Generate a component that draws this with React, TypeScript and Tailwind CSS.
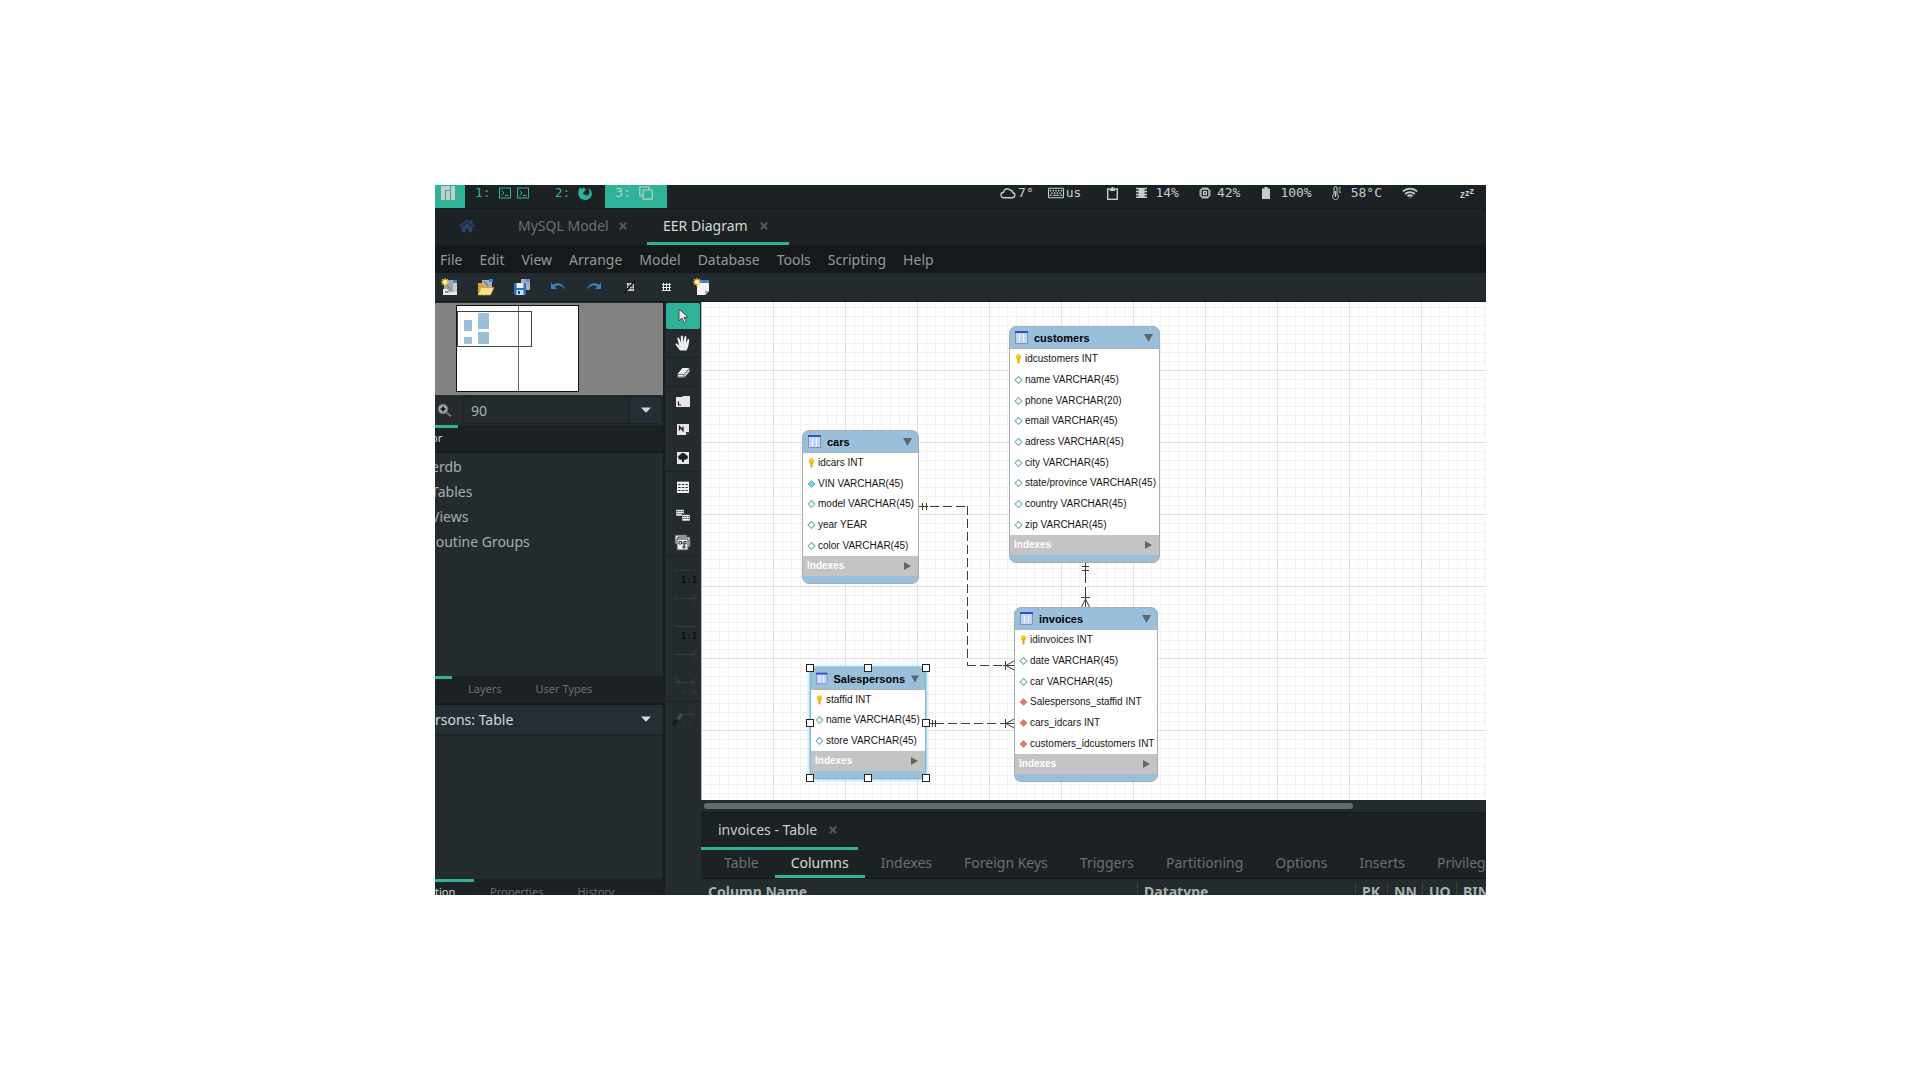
import React from "react";
import { SiManjaro } from "react-icons/si";
import { FaHome, FaRegKeyboard } from "react-icons/fa";

type ColumnKind = "key" | "plain" | "filled" | "foreign";
type Column = { kind: ColumnKind; text: string };

/* ---------- small glyphs ---------- */

function TerminalIcon() {
  return (
    <svg width="12" height="12" viewBox="0 0 12 12" fill="none" stroke="currentColor" aria-hidden="true">
      <rect x="0.5" y="1" width="11" height="10" />
      <path d="M2.5 3.5l2.5 2.5-2.5 2.5M6 8.5h3.5" />
    </svg>
  );
}

function FirefoxIcon() {
  return (
    <svg width="14" height="14" viewBox="0 0 14 14" aria-hidden="true">
      <path
        d="M1.600 1.500c.5.300 1.100.700 1.500 1.200.6-.200 1.200-.2 1.800-.1C5.300 1.700 6 1.200 6.700 1c-.4.700-.4 1.300 0 1.900.7.300 1.500.3 2 .7-.5.700-1.700.8-2.200 1.300-.3.500 0 .9-.4 1.300-.7.200-1.300.6-1 1.400.5 1.100 1.900 1.300 2.900.8.7-.3 1.200-.3 1.500.2-.6.900-1.600 1.300-2.600 1.300 2.400.6 4.500-1 4.600-3.300 0-1.800-.8-3.500-2-4.600 3 1 4.500 3.500 4.300 6.200C13.500 11.600 10.700 14 7.200 14 3.500 14 .4 11.400.3 7.600.2 5.200 1 3.300 1.600 1.500z"
        fill="currentColor"
      />
    </svg>
  );
}

function CopyIcon() {
  return (
    <svg width="14" height="14" viewBox="0 0 14 14" fill="none" stroke="currentColor" strokeWidth="1.2" aria-hidden="true">
      <path d="M4 10H.8V1h9v3" />
      <rect x="4" y="4" width="9.4" height="9.2" rx="0.6" />
    </svg>
  );
}

function CloudIcon() {
  return (
    <svg width="16" height="12" viewBox="0 0 16 12" fill="none" stroke="currentColor" strokeWidth="1.4" aria-hidden="true">
      <path d="M4 10.8h8.2a2.7 2.7 0 0 0 .6-5.3A3.2 3.2 0 0 0 9.9 3 3.6 3.6 0 0 0 3.6 5.2 2.8 2.8 0 0 0 4 10.8z" />
    </svg>
  );
}

function ClipboardIcon() {
  return (
    <svg width="11" height="13" viewBox="0 0 11 13" fill="none" stroke="currentColor" strokeWidth="1.4" aria-hidden="true">
      <rect x="0.7" y="2" width="9.6" height="10.3" />
      <path d="M3 3h5M4.5 1h2" strokeWidth="2" />
    </svg>
  );
}

function MemoryIcon() {
  return (
    <svg width="11" height="12" viewBox="0 0 11 12" fill="currentColor" aria-hidden="true">
      <path d="M2.5 1h6v10h-6z" />
      <path d="M0 1.5h11M0 4.5h11M0 7.5h11M0 10.3h11" stroke="currentColor" strokeWidth="1.4" />
    </svg>
  );
}

function CpuIcon() {
  return (
    <svg width="12" height="12" viewBox="0 0 12 12" fill="none" stroke="currentColor" strokeWidth="1.3" aria-hidden="true">
      <rect x="2" y="2" width="8" height="8" rx="1" />
      <rect x="4.6" y="4.6" width="2.8" height="2.8" />
      <path d="M4 0v2M6 0v2M8 0v2M4 10v2M6 10v2M8 10v2M0 4h2M0 6h2M0 8h2M10 4h2M10 6h2M10 8h2" strokeWidth="0.9" />
    </svg>
  );
}

function BatteryIcon() {
  return (
    <svg width="8" height="12" viewBox="0 0 8 12" fill="currentColor" aria-hidden="true">
      <path d="M2.4 0h3.2v1.4H8V12H0V1.4h2.4z" />
    </svg>
  );
}

function ThermometerIcon() {
  return (
    <svg width="9" height="14" viewBox="0 0 9 14" fill="none" stroke="currentColor" aria-hidden="true">
      <path d="M2 8.2V2a1.5 1.5 0 0 1 3 0v6.2a2.9 2.9 0 1 1-3 0z" />
      <path d="M3.5 5v6" strokeWidth="1.4" />
      <path d="M6.5 2H9M6.5 4H8M6.5 6H9" />
    </svg>
  );
}

function WifiIcon() {
  return (
    <svg width="16" height="12" viewBox="0 0 16 12" fill="none" stroke="currentColor" strokeWidth="1.8" aria-label="Wireless">
      <path d="M.8 4.4a10.6 10.6 0 0 1 14.4 0M3.2 7a7 7 0 0 1 9.6 0M5.5 9.3a3.8 3.8 0 0 1 5 0" />
      <circle cx="8" cy="10.9" r="0.6" fill="currentColor" stroke="none" />
    </svg>
  );
}

function Chevron() {
  return (
    <svg width="10" height="6" viewBox="0 0 10 6" fill="#d3dad8" aria-hidden="true">
      <path d="M0 .5h10L5 5.8z" />
    </svg>
  );
}

function CloseIcon() {
  return (
    <svg width="8" height="8" viewBox="0 0 8 8" stroke="#535859" strokeWidth="2" aria-hidden="true">
      <path d="M.8.8l6.4 6.4M7.2.8L.8 7.2" />
    </svg>
  );
}

function Star() {
  return (
    <g>
      <path d="M4 .2v8M.2 4h7.6M1.2 1.2l5.6 5.6M6.8 1.2L1.2 6.8" stroke="#f2c53d" strokeWidth="1.5" />
      <circle cx="4" cy="4" r="2" fill="#fff3b8" />
    </g>
  );
}

/* ---------- toolbar drawings ---------- */

const toolbarGroups: { label: string; art: React.ReactNode }[][] = [
  [
    {
      label: "New model",
      art: (
        <>
          <path d="M3 2h9v14H3z" fill="#a3a6a4" />
          <path d="M12 2h4v3h-4z" fill="#3f7fdc" />
          <path d="M12 5h4v11h-4z" fill="#c9cccb" />
          <path d="M6 7l4 5" stroke="#838987" strokeWidth="1.4" />
          <path d="M2 11h4l2 3h8v3H2z" fill="#e9ebea" />
          <path d="M4 13h3l1 2H4z" fill="#8f9593" />
          <Star />
        </>
      ),
    },
    {
      label: "Open model",
      art: (
        <>
          <path d="M5 2h10v8H5z" fill="#a9b0b5" />
          <path d="M12 1h4v3h-4z" fill="#3f7fdc" />
          <path d="M1 5h4l1 2v10H1z" fill="#d9a528" />
          <path d="M4 9.500h13l-3.500 7.500H1z" fill="#fbe08a" stroke="#c99524" strokeWidth="0.7" />
          <path d="M7 3l4 5" stroke="#727b80" strokeWidth="1.300" />
        </>
      ),
    },
    {
      label: "Save model",
      art: (
        <>
          <path d="M8 1h9v11H8z" fill="#a9b0b5" />
          <path d="M13 1h4v3h-4z" fill="#5b93e6" />
          <path d="M1 5h12v12H1z" fill="#2a6fc4" />
          <path d="M3.500 5h7v5h-7z" fill="#e9f0f7" />
          <path d="M3.500 12h7v5h-7z" fill="#cfe0f2" />
          <path d="M5 13h2v3H5z" fill="#1c4b88" />
        </>
      ),
    },
  ],
  [
    {
      label: "Undo",
      art: <path d="M2 4v7h6L5.800 8.700C9 6.500 12.500 7.300 16 11.500 14.500 5.500 8.500 3.500 4 7z" fill="#3f7fbb" />,
    },
    {
      label: "Redo",
      art: <path d="M16 4v7h-6l2.200-2.300C9 6.500 5.500 7.300 2 11.500 3.500 5.500 9.500 3.500 14 7z" fill="#3f7fbb" />,
    },
  ],
  [
    {
      label: "Toggle grid",
      art: (
        <>
          <path d="M6 5h7v8H6z" fill="#efefef" />
          <path d="M8 5v8M11 5v8M6 8h7M6 10.500h7" stroke="#5c6263" />
          <path d="M3 15L14 3" stroke="#0b0d0e" strokeWidth="1.600" />
        </>
      ),
    },
    {
      label: "Toggle alignment",
      art: <path d="M6.500 5v8M9.500 5v8M12.500 5v8M5 6.500h9M5 9.500h9M5 12.500h9" stroke="#e7eaea" />,
    },
  ],
  [
    {
      label: "New diagram",
      art: (
        <>
          <path d="M4 2h12v4H4z" fill="#3f7fdc" />
          <path d="M4 5h12v8l-4 4H4z" fill="#f3f4f4" />
          <path d="M16 13h-4v4z" fill="#a9adad" />
          <Star />
        </>
      ),
    },
  ],
];

const MiniTable = ({ x, y }: { x: number; y: number }) => (
  <g transform={`translate(${x} ${y})`}>
    <path d="M0 0h8v7H0z" fill="#f0f0f0" stroke="#2c3132" strokeWidth="0.6" />
    <path d="M0 .5h8" stroke="#474d4e" />
    <path d="M1 2.500h6M1 4.500h6" stroke="#474d4e" strokeDasharray="1.500 .8" />
  </g>
);

const toolGroups: { label: string; active?: boolean; art: React.ReactNode }[][] = [
  [
    {
      label: "Select",
      active: true,
      art: <path d="M5 2v12l3-3 2.300 5 2-1-2.300-4.700h4z" fill="#f2f2f2" stroke="#4a4a4a" />,
    },
    {
      label: "Hand",
      art: (
        <path
          d="M6 16.500l-4.600-6c-.3-1.200 1.500-1.500 2.200-.6L5.200 11.400 3.400 4.800c-.1-1.500 1.500-1.600 1.900-.2L7 8.500 6.800 2.600c.2-1.500 1.900-1.500 2.100 0L9.300 8.300l1.100-5.400c.4-1.300 2-1.100 2 .3L11.900 9l1.500-3.300c.6-1.200 2.100-.8 1.900.6-.6 3.700-.7 7.200-2.900 10.200z"
          fill="#ededed"
        />
      ),
    },
  ],
  [
    {
      label: "Eraser",
      art: (
        <>
          <path d="M8.500 5h7l-5 6h-7z" fill="#fafafa" />
          <path d="M3.500 11h7L15.500 5v3.500l-5 6h-7z" fill="#d9dbdb" />
          <path d="M3.500 11.500h6.500v2.500H3.500z" fill="#f4f4f4" stroke="#3b4041" strokeWidth="0.8" />
          <path d="M10.500 11l5-6" stroke="#3b4041" strokeWidth="0.8" />
        </>
      ),
    },
  ],
  [
    {
      label: "Layer",
      art: (
        <>
          <path d="M2 5h6l1-1h7v11H2z" fill="#e6e6e6" />
          <path d="M4.500 9.500v3.500H7" stroke="#222" strokeWidth="1.200" fill="none" />
        </>
      ),
    },
    {
      label: "Note",
      art: (
        <>
          <path d="M3 4h12v8l-3 3H3z" fill="#e6e6e6" />
          <path d="M12 12h3l-3 3z" fill="#2a2f30" />
          <path d="M5.500 10.500V6.500l3.500 4v-4" stroke="#222" strokeWidth="1.300" fill="none" />
        </>
      ),
    },
    {
      label: "Image",
      art: (
        <>
          <path d="M3 4h12v12H3z" fill="#e6e6e6" />
          <path d="M9 5a3 3 0 0 1 3 2 2.200 2.200 0 0 1 1 4 2.500 2.500 0 0 1-3 .5V14H8v-2.500A2.500 2.500 0 0 1 5 11a2.200 2.200 0 0 1 1-4 3 3 0 0 1 3-2z" fill="#1d1f20" />
        </>
      ),
    },
  ],
  [
    {
      label: "Table",
      art: (
        <>
          <path d="M3 5h12v11H3z" fill="#f0f0f0" />
          <path d="M4 7.500h10M4 10.500h10M4 13.500h10" stroke="#3b4041" strokeDasharray="2.700 1" />
          <path d="M3 4.500h12" stroke="#6b7071" />
        </>
      ),
    },
    {
      label: "View",
      art: (
        <>
          <MiniTable x={2} y={4} />
          <MiniTable x={8} y={9} />
        </>
      ),
    },
    {
      label: "Routine group",
      art: (
        <>
          <path d="M1 2h12v9H1z" fill="#dcdcdc" stroke="#454b4c" />
          <path d="M4 4h12v10H4z" fill="#dcdcdc" stroke="#454b4c" />
          <path d="M3 6h11v11H3z" fill="#efefef" stroke="#454b4c" />
          <path d="M5 8.500h2.500V11H5zM10 8.500h2V11h-2zM9 13h2v2H9zM7.500 10h2.500M10 11v2" stroke="#222" strokeWidth="0.9" fill="none" />
        </>
      ),
    },
  ],
];

const relationTools = [
  { label: "1:1", dashed: true, many: false, both: false, tone: "text-black" },
  { label: "1:n", dashed: true, many: true, both: false, tone: "text-[#2c2f31]" },
  { label: "1:1", dashed: false, many: false, both: false, tone: "text-black" },
  { label: "1:n", dashed: false, many: true, both: false, tone: "text-[#2c2f31]" },
  { label: "n:m", dashed: false, many: true, both: true, tone: "text-[#35393b]" },
];

/* ---------- diagram ---------- */

const marks: Record<ColumnKind, React.ReactNode> = {
  key: (
    <>
      <circle cx="4.500" cy="3" r="2.700" fill="#f6c81e" />
      <path d="M3.500 4h2v5l-1 .8-1-.8z" fill="#e0a800" />
    </>
  ),
  plain: <path d="M4.500 1.500L8 5 4.500 8.500 1 5z" fill="#fff" stroke="#7db5b5" strokeWidth="1.100" />,
  filled: <path d="M4.500 1.500L8 5 4.500 8.500 1 5z" fill="#63dbe3" stroke="#7ab0b3" strokeWidth="0.900" />,
  foreign: <path d="M4.500 1.500L8 5 4.500 8.500 1 5z" fill="#e8756c" stroke="#c58c88" strokeWidth="0.900" />,
};

function EntityTable({ name, columns, place, rows, selected }: { name: string; columns: Column[]; place: string; rows: string; selected?: boolean }) {
  return (
    <section aria-label={name} className={`absolute ${place}`}>
      <div
        className={`overflow-hidden rounded-[7px] border bg-[#99bfda] ${
          selected ? "border-[#8fb4c9] shadow-[0_0_3px_1px_#7fd4f5]" : "border-[#a9adb0]"
        }`}
      >
        <header className="flex h-[22px] items-center gap-1.5 border-b border-[#a9b4bb] pr-1.5 pl-[5px]">
          <svg width="13" height="13" viewBox="0 0 13 13" aria-hidden="true">
            <path d="M.5.5h12v12H.5z" fill="#c3d4f5" stroke="#7d93bd" />
            <path d="M0 0h13v2H0z" fill="#2b4fd0" />
            <path d="M4.500 3v8M8.500 3v8" stroke="#f1f6ff" />
          </svg>
          <h2 className="text-[11px] leading-4 font-bold text-black">{name}</h2>
          <svg className="ml-auto" width="9" height="8" viewBox="0 0 9 8" fill="#5d666c" aria-hidden="true">
            <path d="M0 0h9L4.500 8z" />
          </svg>
        </header>
        <ul className={`flex flex-col bg-white ${rows}`}>
          {columns.map((c) => (
            <li key={c.text} className="flex min-h-0 flex-1 items-center gap-0.5 pl-1 text-[10px] leading-4 whitespace-nowrap text-[#151515]">
              <svg width="9" height="10" viewBox="0 0 9 10" className="shrink-0" aria-hidden="true">
                {marks[c.kind]}
              </svg>
              {c.text}
            </li>
          ))}
        </ul>
        <div className="flex h-5 items-center justify-between bg-[#c4c4c4] pr-[7px] pl-1 text-[10px] font-bold text-white">
          Indexes
          <svg width="7" height="8" viewBox="0 0 7 8" fill="#666" aria-hidden="true">
            <path d="M0 0v8l7-4z" />
          </svg>
        </div>
        <div className="h-[7px]" />
      </div>
      {selected && (
        <div className="absolute -inset-x-1 -inset-y-[3px] grid grid-cols-3 grid-rows-3">
          {[
            "self-start justify-self-start",
            "self-start justify-self-center",
            "self-start justify-self-end",
            "self-center justify-self-start",
            "",
            "self-center justify-self-end",
            "self-end justify-self-start",
            "self-end justify-self-center",
            "self-end justify-self-end",
          ].map((spot, i) => (spot ? <span key={i} className={`size-2 border border-[#222] bg-white ${spot}`} /> : <span key={i} />))}
        </div>
      )}
    </section>
  );
}

const v = (text: string): Column => ({ kind: "plain", text });

const cars: Column[] = [
  { kind: "key", text: "idcars INT" },
  { kind: "filled", text: "VIN VARCHAR(45)" },
  v("model VARCHAR(45)"),
  v("year YEAR"),
  v("color VARCHAR(45)"),
];
const customers: Column[] = [
  { kind: "key", text: "idcustomers INT" },
  v("name VARCHAR(45)"),
  v("phone VARCHAR(20)"),
  v("email VARCHAR(45)"),
  v("adress VARCHAR(45)"),
  v("city VARCHAR(45)"),
  v("state/province VARCHAR(45)"),
  v("country VARCHAR(45)"),
  v("zip VARCHAR(45)"),
];
const invoices: Column[] = [
  { kind: "key", text: "idinvoices INT" },
  v("date VARCHAR(45)"),
  v("car VARCHAR(45)"),
  { kind: "foreign", text: "Salespersons_staffid INT" },
  { kind: "foreign", text: "cars_idcars INT" },
  { kind: "foreign", text: "customers_idcustomers INT" },
];
const salespersons: Column[] = [{ kind: "key", text: "staffid INT" }, v("name VARCHAR(45)"), v("store VARCHAR(45)")];

function DiagramCanvas() {
  return (
    <div className="relative min-h-0 flex-1 overflow-hidden border-l border-[#b5b9ba] bg-white font-['Liberation_Sans',sans-serif]">
      <svg className="absolute inset-0 size-full" aria-hidden="true">
        <defs>
          <pattern id="minor" width="9" height="9" y="5" patternUnits="userSpaceOnUse">
            <path d="M8.500 0v9M0 .5h9" stroke="#f1f1f1" />
          </pattern>
          <pattern id="major" width="72" height="72" y="68" patternUnits="userSpaceOnUse">
            <path d="M71.500 0v72M0 .5h72" stroke="#e0e0e0" />
          </pattern>
        </defs>
        <rect width="100%" height="100%" fill="url(#minor)" />
        <rect width="100%" height="100%" fill="url(#major)" />
        <g fill="none" stroke="#3c3c3c">
          <g strokeDasharray="9 4">
            <path d="M228 204.500h37M265.500 204v159M265 363.500h36" />
            <path d="M233 421.500h70" />
            <path d="M383.500 272v22" />
          </g>
          <path d="M217 204.500h9M220.500 201v7M224.500 201v7" />
          <path d="M303.500 359v9M312 359l-8 4.500 8 4.500M301 363.500h11" />
          <path d="M227 421.500h11M230.500 418v7M233.500 418v7" />
          <path d="M303.500 417v9M312 417l-8 4.500 8 4.500M301 421.500h11" />
          <path d="M383.500 260v12M380 264.500h7M380 268.500h7" />
          <path d="M379 295.500h9M379.500 305l4-8 4 8M383.500 294v11" />
        </g>
      </svg>
      <EntityTable name="customers" columns={customers} place="left-[307px] top-6 w-[151px]" rows="h-[186px]" />
      <EntityTable name="cars" columns={cars} place="left-[100px] top-32 w-[117px]" rows="h-[103px]" />
      <EntityTable name="invoices" columns={invoices} place="left-[312px] top-[305px] w-[144px]" rows="h-[124px]" />
      <EntityTable name="Salespersons" columns={salespersons} place="left-[108px] top-[365px] w-[116px]" rows="h-[61px]" selected />
    </div>
  );
}

/* ---------- bars and panels ---------- */

function StatusBar() {
  return (
    <div className="flex h-6 shrink-0 border-b border-[#15191b] font-['DejaVu_Sans_Mono',monospace] text-[13px] leading-4 whitespace-pre text-[#c5cdcb]">
      <div className="flex w-[30px] justify-center bg-[#2eb398] pr-1">
        <SiManjaro className="mt-px size-3.5" aria-label="Menu" />
      </div>
      <button className="flex items-start gap-2 pr-4 pl-2.5 text-[#2eb398]">
        <span>1:</span>
        <span className="flex gap-1.5 pt-0.5">
          <TerminalIcon />
          <TerminalIcon />
        </span>
      </button>
      <button className="flex items-start gap-2 px-[13px] pl-2.5 text-[#2eb398]">
        <span>2:</span>
        <span className="pt-px">
          <FirefoxIcon />
        </span>
      </button>
      <button className="flex w-[62px] items-start gap-2 bg-[#2eb398] pl-2.5">
        <span>3:</span>
        <span className="pt-px">
          <CopyIcon />
        </span>
      </button>
      <div className="ml-auto flex h-4 items-center pr-3">
        <CloudIcon />
        <span className="ml-0.5">7°</span>
        <FaRegKeyboard className="ml-3.5 size-4" aria-label="Keyboard layout" />
        <span className="ml-0.5">us</span>
        <span className="ml-[26px]">
          <ClipboardIcon />
        </span>
        <span className="ml-[18px]">
          <MemoryIcon />
        </span>
        <span className="ml-2">14%</span>
        <span className="ml-5">
          <CpuIcon />
        </span>
        <span className="ml-1.5">42%</span>
        <span className="ml-[22px]">
          <BatteryIcon />
        </span>
        <span className="ml-2.5">100%</span>
        <span className="ml-5">
          <ThermometerIcon />
        </span>
        <span className="ml-2.5">58°C</span>
        <span className="ml-5">
          <WifiIcon />
        </span>
        <span className="ml-[42px] flex items-end font-['Liberation_Sans',sans-serif] text-[10px] leading-3 font-bold">
          <span>z</span>
          <span className="pb-0.5 text-[9px] leading-3">z</span>
          <span className="pb-1 text-[9px] leading-3">z</span>
        </span>
      </div>
    </div>
  );
}

function DocumentTabs() {
  return (
    <div className="flex h-9 shrink-0 bg-[#1c2224]" role="tablist">
      <button role="tab" aria-label="Home" className="flex w-[67px] items-center pb-0.5 pl-6 text-[#2c4069]">
        <FaHome className="size-4" />
      </button>
      <button role="tab" className="flex w-[145px] items-center gap-2.5 pb-0.5 pl-4 text-[#667071]">
        MySQL Model
        <CloseIcon />
      </button>
      <button role="tab" aria-selected="true" className="flex w-[142px] items-center gap-3 border-b-3 border-[#2eb398] pt-px pl-4 text-[#d3dad8]">
        EER Diagram
        <CloseIcon />
      </button>
    </div>
  );
}

const menus = ["File", "Edit", "View", "Arrange", "Model", "Database", "Tools", "Scripting", "Help"];

function Overview() {
  return (
    <svg width="228" height="92" className="block w-full bg-[#828282]" viewBox="0 0 228 92" preserveAspectRatio="xMinYMin slice" aria-label="Bird's eye view">
      <rect x="21.500" y="2.500" width="122" height="86" fill="#fff" stroke="#111" />
      <path d="M83.500 3v85" stroke="#666" />
      <path d="M29 17h8v11h-8zM43 10h11v16H43zM29 34h8v7h-8zM43 29h11v12H43z" fill="#99bfda" />
      <rect x="22.500" y="8.500" width="74" height="35" fill="none" stroke="#444" />
    </svg>
  );
}

function Sidebar() {
  const small = "text-[11px] leading-4";
  return (
    <aside className="flex w-[230px] shrink-0 flex-col overflow-hidden border-r-2 border-[#181d1f]">
      <div className="pt-px">
        <Overview />
      </div>
      <div className="flex h-[30px] shrink-0 items-center pr-px">
        <button aria-label="Zoom in" className="w-[27px] pl-0.5">
          <svg width="15" height="15" viewBox="0 0 15 15" aria-hidden="true">
            <path d="M9 9l5 4.500" stroke="#8a6a55" strokeWidth="2" />
            <circle cx="6" cy="6" r="4.800" fill="#9fa5a5" stroke="#6a7071" />
            <path d="M6 3.500v5M3.500 6h5" stroke="#111" strokeWidth="1.600" />
          </svg>
        </button>
        <div className="flex h-7 min-w-0 flex-1 rounded-sm border border-[#1a2022]">
          <input aria-label="Zoom level" defaultValue="90" className="min-w-0 flex-1 bg-transparent px-2 pt-0.5 text-sm text-[#a9b3b1]" />
          <button aria-label="Zoom presets" className="grid w-8 place-items-center border-l border-[#1a2022] bg-[#252d35]">
            <Chevron />
          </button>
        </div>
      </div>
      <div className="h-7 shrink-0 border-b-2 border-[#15191b] bg-[#1c2224]" role="tablist">
        <button role="tab" aria-selected="true" className={`flex h-[26px] w-[23px] border-t-3 border-[#2eb398] pt-0.5 text-[#d3dad8] ${small}`}>
          <span className="-ml-1">or</span>
        </button>
      </div>
      <ul className="-ml-1 min-h-0 flex-1 pt-px text-sm leading-[25px] text-[#a3aead]">
        <li>erdb</li>
        <li>Tables</li>
        <li>Views</li>
        <li className="-ml-1">Routine Groups</li>
      </ul>
      <div className={`flex h-[29px] shrink-0 items-start border-b-2 border-[#15191b] bg-[#1c2224] text-[#667071] ${small}`} role="tablist">
        <button role="tab" aria-label="Catalog" aria-selected="true" className="h-[3px] w-[17px] bg-[#2eb398]" />
        <button role="tab" className="ml-4 h-[26px]">Layers</button>
        <button role="tab" className="ml-[34px] h-[26px]">User Types</button>
      </div>
      <div className="relative shrink-0 pr-px pb-0.5">
        <select aria-label="Selected object" className="h-7 w-full appearance-none bg-[#252d35] pt-0.5 text-sm text-[#d3dad8]">
          <option>rsons: Table</option>
        </select>
        <span className="pointer-events-none absolute top-[11px] right-3">
          <Chevron />
        </span>
      </div>
      <div className="h-36 shrink-0 border-t border-r border-[#1c2224]" />
      <div className={`flex h-4 shrink-0 items-start overflow-hidden bg-[#1c2224] text-[#667071] ${small}`} role="tablist">
        <button role="tab" aria-selected="true" className="w-[39px] border-t-3 border-[#2eb398] pt-0.5 text-left text-[#d3dad8]">
          tion
        </button>
        <button role="tab" className="ml-4 pt-[5px]">Properties</button>
        <button role="tab" className="ml-[34px] pt-[5px]">History</button>
      </div>
    </aside>
  );
}

function ToolStrip() {
  return (
    <nav aria-label="Diagram tools" className="flex w-9 shrink-0 flex-col pt-px">
      {toolGroups.map((group, g) => (
        <div key={g} className="flex flex-col border-b border-[#1c2224]">
          {group.map((t) => (
            <button
              key={t.label}
              aria-label={t.label}
              className={`mx-px grid place-items-center rounded-xs ${t.active ? "h-[26px] bg-[#2eb398]" : "h-7"}`}
            >
              <svg width="18" height="18" viewBox="0 0 18 18" aria-hidden="true">
                {t.art}
              </svg>
            </button>
          ))}
        </div>
      ))}
      <div className="flex flex-col border-b border-[#1c2224] pt-1">
        {relationTools.map((r, i) => (
          <button key={i} className={`flex h-7 flex-col items-end pt-1 pr-1 font-['DejaVu_Sans_Mono',monospace] text-[9px] leading-3 ${r.tone}`}>
            <svg width="22" height="10" viewBox="0 0 22 10" fill="none" stroke="#3b3c3e" className="shrink-0" aria-hidden="true">
              <path d="M0 5.500h21" strokeDasharray={r.dashed ? "4 2" : undefined} />
              {r.many && <path d="M22 .5l-6 5 6 5" />}
              {r.both && <path d="M0 .5l6 5-6 5" />}
            </svg>
            <span className="-mt-px">{r.label}</span>
          </button>
        ))}
      </div>
      <button aria-label="Place relationship using existing columns" className="flex justify-end pt-2 pr-1.5">
        <svg width="23" height="16" viewBox="0 0 23 16" fill="none" stroke="#35393b" aria-hidden="true">
          <path d="M11 4.500h12M23 0l-6 4.500L23 9M13 12v4M18 12v4" />
          <path d="M1 15l4-5" stroke="#15191b" strokeWidth="3" />
          <path d="M6 9l4-5" stroke="#4a4f51" strokeWidth="3" />
        </svg>
      </button>
    </nav>
  );
}

const editorTabs = ["Table", "Columns", "Indexes", "Foreign Keys", "Triggers", "Partitioning", "Options", "Inserts", "Privileges"];

const headerCells: [string, string][] = [
  ["Column Name", "w-[436px]"],
  ["Datatype", "w-[218px]"],
  ["PK", "w-8"],
  ["NN", "w-[35px]"],
  ["UQ", "w-[34px]"],
  ["BIN", "w-10"],
];

function TableEditor() {
  return (
    <div className="flex h-[95px] shrink-0 flex-col overflow-hidden">
      <div className="h-3 shrink-0 px-[3px] pt-[3px]">
        <div className="h-1.5 w-5/6 rounded-full bg-[#626c6b]" />
      </div>
      <div className="flex h-[38px] shrink-0 border-t border-[#15191b] bg-[#1c2224]" role="tablist">
        <button role="tab" aria-selected="true" className="flex w-[157px] items-center gap-3 border-b-3 border-[#2eb398] pl-[17px] text-[#c5cdcb]">
          invoices - Table
          <CloseIcon />
        </button>
      </div>
      <div className="flex h-[29px] shrink-0 border-b border-[#15191b] bg-[#1c2224] pl-[7px]" role="tablist">
        {editorTabs.map((t) => (
          <button
            key={t}
            role="tab"
            aria-selected={t === "Columns"}
            className={`shrink-0 border-b-3 px-4 pt-px ${t === "Columns" ? "border-[#2eb398] text-[#d3dad8]" : "border-transparent text-[#667071]"}`}
          >
            {t}
          </button>
        ))}
      </div>
      <table className="w-full table-fixed border-collapse">
        <thead>
          <tr>
            {headerCells.map(([h, w], i) => (
              <th key={h} scope="col" className={`${w} p-0 pt-[3px] text-left leading-5 font-bold whitespace-nowrap text-[#a9b3b1]`}>
                <span className={`block ${i ? "border-l border-[#3a4244] pl-1.5" : "pl-[7px]"}`}>{h}</span>
              </th>
            ))}
          </tr>
        </thead>
      </table>
    </div>
  );
}

export default function App() {
  return (
    <main className="h-screen bg-white py-[185px] pr-[434px] pl-[435px] font-['Noto_Sans',sans-serif] text-sm leading-5">
      <div className="flex h-full flex-col overflow-hidden bg-[#232b2e]">
        <div className="bg-[#1c2224]">
          <StatusBar />
          <DocumentTabs />
        </div>
        <nav aria-label="Main menu" className="flex h-7 shrink-0 items-center gap-[17px] bg-[#15191b] pt-0.5 pl-[5px] text-[#909998]">
          {menus.map((m) => (
            <button key={m}>{m}</button>
          ))}
        </nav>
        <div role="toolbar" aria-label="Model actions" className="flex h-[29px] shrink-0 items-center gap-4 border-b border-[#15191b] pl-[5px]">
          {toolbarGroups.map((group, g) => (
            <div key={g} className="flex gap-4">
              {group.map((t) => (
                <button key={t.label} aria-label={t.label} className="grid size-5 place-items-center">
                  <svg width="18" height="18" viewBox="0 0 18 18" aria-hidden="true">
                    {t.art}
                  </svg>
                </button>
              ))}
            </div>
          ))}
        </div>
        <div className="flex min-h-0 flex-1">
          <Sidebar />
          <ToolStrip />
          <div className="flex min-w-0 flex-1 flex-col">
            <DiagramCanvas />
            <TableEditor />
          </div>
        </div>
      </div>
    </main>
  );
}
